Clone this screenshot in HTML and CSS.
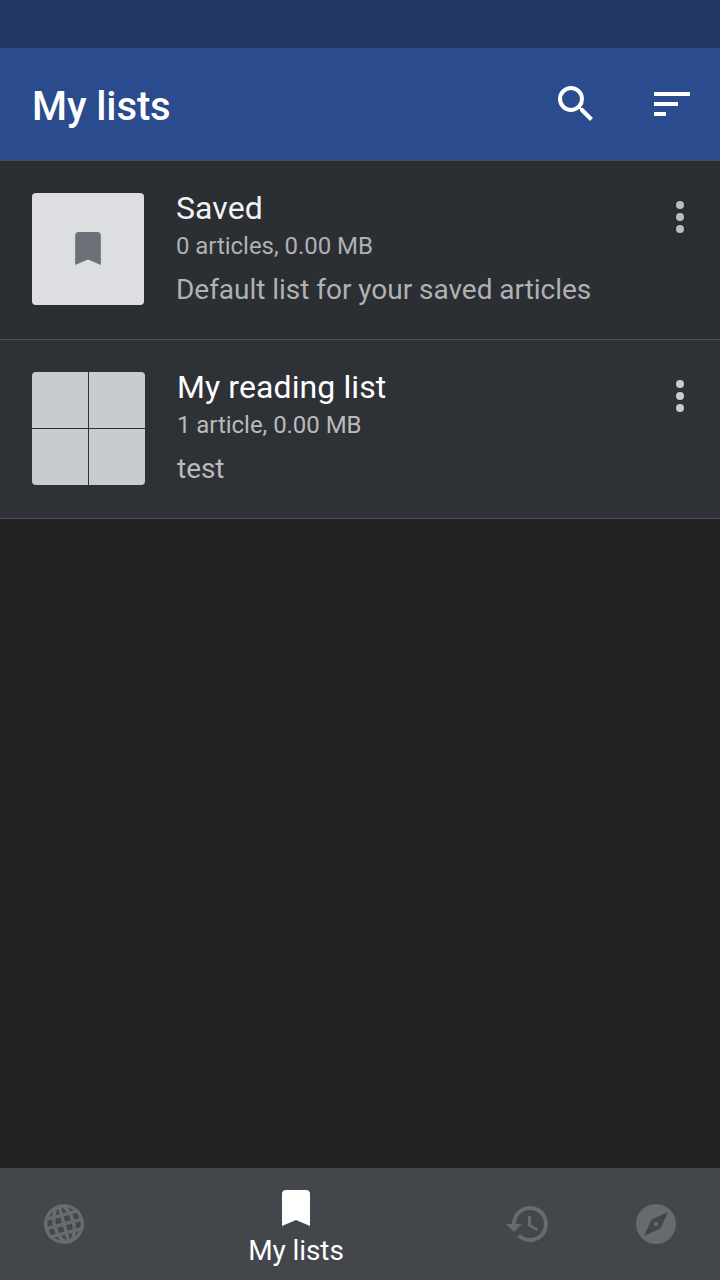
FILE: index.html
```html
<!DOCTYPE html>
<html lang="en">
<head>
<meta charset="utf-8">
<title>My lists</title>
<link rel="stylesheet" href="styles.css">
</head>
<body>
<div class="screen">
  <div class="status-bar"></div>
  <header class="toolbar">
    <h1 class="toolbar-title">My lists</h1>
    <svg class="icon" viewBox="0 0 24 24"><path d="M15.5 14h-.79l-.28-.27A6.47 6.47 0 0 0 16 9.5 6.5 6.5 0 1 0 9.500 16c1.610 0 3.090-.590 4.230-1.570l.270.280v.790l5 4.990L20.490 19l-4.990-5zm-6 0a4.500 4.500 0 1 1 0-9 4.500 4.500 0 0 1 0 9z"/></svg>
    <svg class="icon" viewBox="0 0 24 24"><path d="M3 18h6v-2H3v2zM3 6v2h18V6H3zm0 7h12v-2H3v2z"/></svg>
  </header>
  <main class="lists">
    <article class="row">
      <div class="thumb thumb-default">
        <svg class="thumb-icon" viewBox="0 0 28 36"><path d="M4 0H24Q28 0 28 4V36L14 30L0 36V4Q0 0 4 0Z"/></svg>
      </div>
      <div class="info">
        <h2 class="name">Saved</h2>
        <p class="meta">0 articles, 0.00 MB</p>
        <p class="description">Default list for your saved articles</p>
      </div>
      <svg class="icon more" viewBox="0 0 48 48"><circle cx="24" cy="12" r="4"/><circle cx="24" cy="24" r="4"/><circle cx="24" cy="36" r="4"/></svg>
    </article>
    <article class="row row-current">
      <div class="thumb thumb-grid"><i></i><i></i><i></i><i></i></div>
      <div class="info">
        <h2 class="name">My reading list</h2>
        <p class="meta">1 article, 0.00 MB</p>
        <p class="description">test</p>
      </div>
      <svg class="icon more" viewBox="0 0 48 48"><circle cx="24" cy="12" r="4"/><circle cx="24" cy="24" r="4"/><circle cx="24" cy="36" r="4"/></svg>
    </article>
  </main>
  <nav class="tabs">
    <div class="tab">
      <svg class="icon globe" viewBox="0 0 48 48"><g transform="rotate(-15 24 24)"><circle cx="24" cy="24" r="18.300"/><ellipse cx="24" cy="24" rx="9.500" ry="18.300"/><path d="M24 5.700V42.300M5.700 24H42.300M9 15H39M9 33H39"/></g></svg>
    </div>
    <div class="tab tab-active">
      <svg class="tab-bookmark" viewBox="0 0 28 36"><path d="M4 0H24Q28 0 28 4V36L14 30L0 36V4Q0 0 4 0Z"/></svg>
      <span class="tab-label">My lists</span>
    </div>
    <div class="tab">
      <svg class="icon" viewBox="0 0 24 24"><path d="M13 3a9 9 0 0 0-9 9H1l3.890 3.890.070.140L9 12H6a7 7 0 1 1 7 7 6.980 6.980 0 0 1-4.940-2.060l-1.420 1.420A9 9 0 1 0 13 3zm-1 5v5l4.280 2.540.720-1.210-3.500-2.080V8H12z"/></svg>
    </div>
    <div class="tab">
      <svg class="icon" viewBox="0 0 48 48"><path fill-rule="evenodd" d="M24 4a20 20 0 1 0 0 40 20 20 0 0 0 0-40zM36 12L28.500 28.500L12 36L19.500 19.500z"/><circle cx="24" cy="24" r="2.200"/></svg>
    </div>
  </nav>
</div>
</body>
</html>
```
FILE: styles.css
```css
* { box-sizing: border-box; }
body { margin: 0; background: #222; font-family: Roboto, sans-serif; }
h1, h2, p { margin: 0; font-weight: 400; }
svg { display: block; flex: none; }
.screen { width: 720px; height: 1280px; display: flex; flex-direction: column; }
.status-bar { height: 48px; background: #223963; }
.toolbar { height: 112px; display: flex; align-items: center; gap: 48px; padding: 0 24px 0 32px; background: #2a4b8d; color: #fff; }
.toolbar-title { flex: 1; font-size: 40px; line-height: 48px; font-weight: 500; padding-top: 6px; letter-spacing: -0.1px; }
.icon { width: 48px; height: 48px; fill: currentColor; }
.lists { flex: 1; border-top: 1px solid #4b4d4f; }
.row { height: 179px; display: flex; padding: 32px 16px 0 32px; background: #2b2e33; border-bottom: 1px solid #4b4d4f; color: #f2f2f2; }
.row-current { background: #2e3136; color: #fff; }
.thumb { width: 112px; height: 112px; flex: none; border-radius: 4px; overflow: hidden; }
.thumb-default { display: flex; align-items: center; justify-content: center; background: #dcdee2; color: #6c7079; padding-bottom: 1px; }
.thumb-icon { width: 26px; height: 33px; fill: currentColor; }
.thumb-grid { width: 113px; height: 113px; display: grid; grid-template-columns: 56px 56px; grid-template-rows: 56px 56px; gap: 1px; }
.thumb-grid i { background: #c8ccd1; }
.info { flex: 1; padding-left: 32px; }
.name { font-size: 32px; line-height: 38px; margin-top: -4px; letter-spacing: 0.1px; }
.meta { font-size: 24px; line-height: 28px; margin-top: 5px; color: #b0b1b2; letter-spacing: -0.05px; }
.description { font-size: 28px; line-height: 34px; margin-top: 13px; color: #b0b1b2; letter-spacing: -0.03px; }
.more { color: #babdc2; }
.row-current .meta, .row-current .description { color: #bababb; }
.row-current .more { color: #c8ccd1; }
.tabs { height: 112px; display: grid; grid-template-columns: 128px 336px 128px 128px; background: #43464a; }
.tab { display: flex; flex-direction: column; align-items: center; justify-content: center; color: #676b6e; }
.tab-active { justify-content: flex-start; padding-top: 22px; color: #fff; }
.tab-bookmark { width: 28px; height: 36px; fill: currentColor; }
.tab-label { font-size: 28px; line-height: 32px; margin-top: 9px; letter-spacing: -0.1px; }
.globe { fill: none; stroke: currentColor; stroke-width: 3.4; }
```
